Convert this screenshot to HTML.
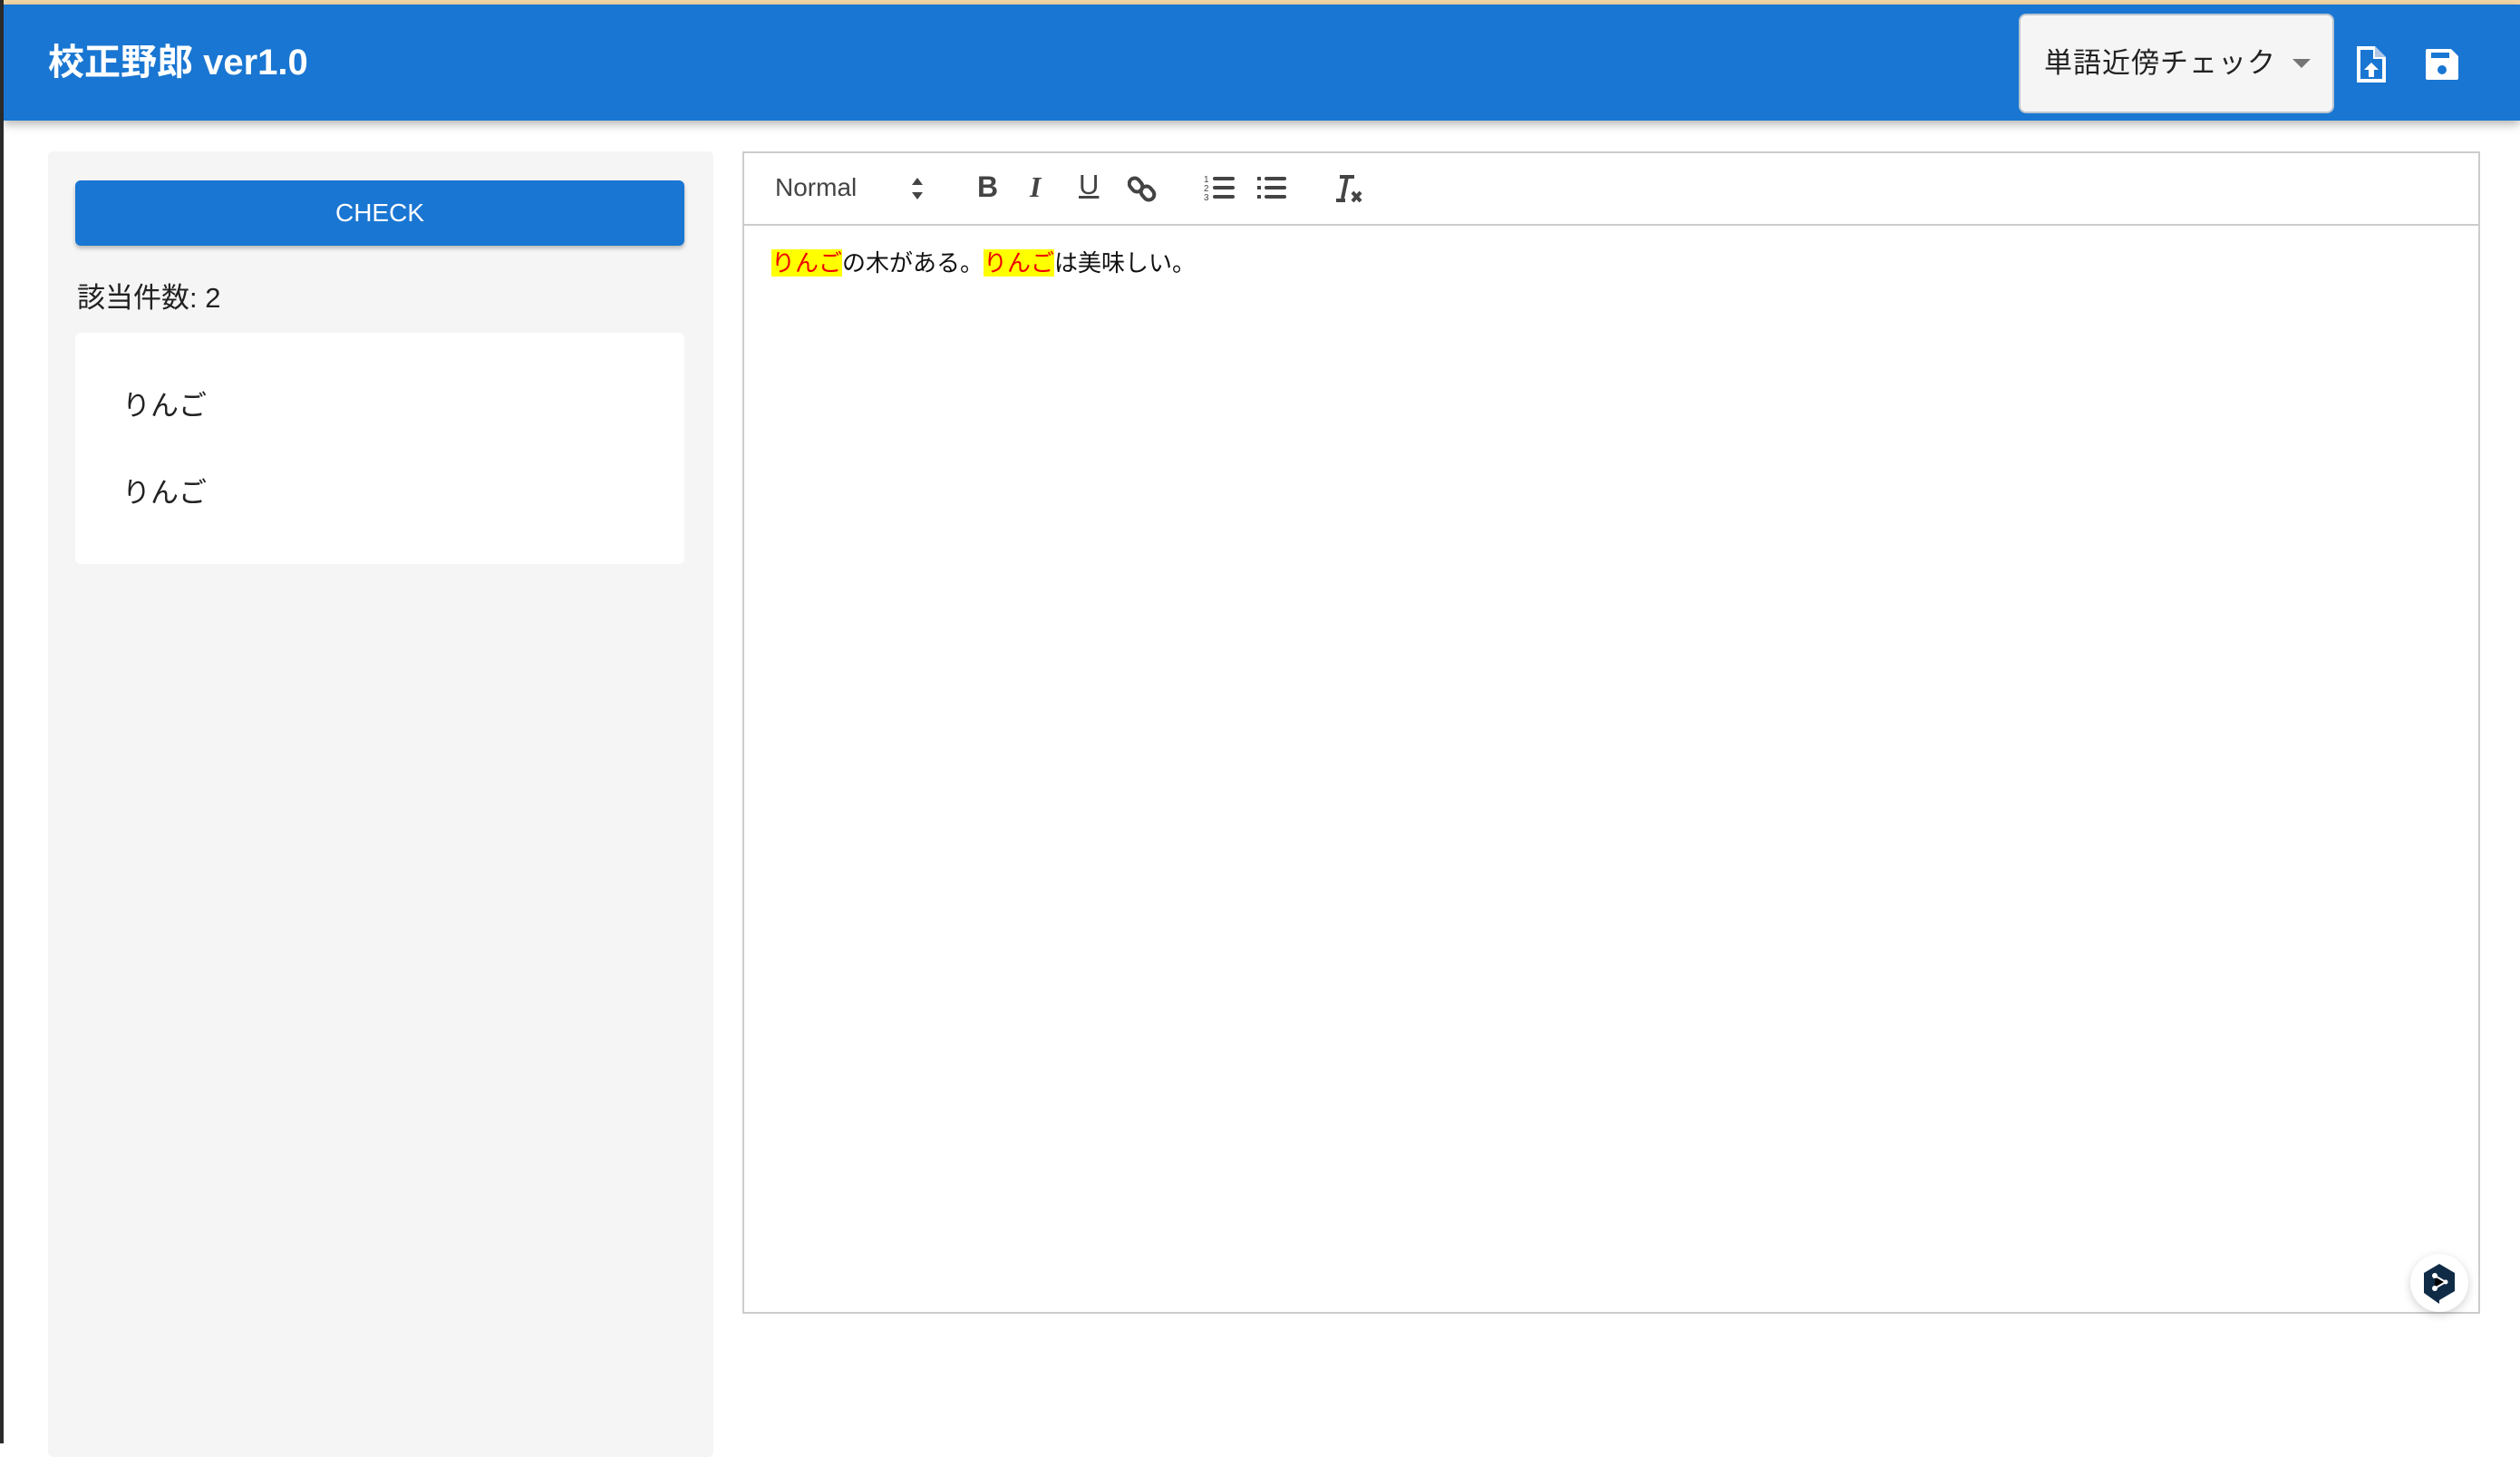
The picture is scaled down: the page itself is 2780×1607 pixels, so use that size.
<!DOCTYPE html>
<html><head><meta charset="utf-8"><style>
*{margin:0;padding:0;box-sizing:border-box}
body{width:2780px;height:1592px;overflow:hidden;background:#fff;position:relative;font-family:"Liberation Sans","Noto Sans CJK JP",sans-serif;}
.abs{position:absolute}
#top{left:0;top:0;width:2780px;height:5px;background:#f3d7a7}
#lb{left:0;top:0;width:4px;height:1592px;background:#2a2a2a}
#hdr{left:4px;top:5px;width:2776px;height:128px;background:#1976d2;box-shadow:0 4px 10px rgba(0,0,0,.3)}
#title{left:53px;top:45px;color:#fff;font-size:40px;font-weight:bold;line-height:48px}
#sel{left:2227px;top:15px;width:348px;height:110px;background:#f5f5f5;border:2px solid #b8c4d0;border-radius:8px;font-size:31px;color:#222;padding-left:26px;line-height:106px;letter-spacing:1px}
#caret{left:2529px;top:65px;width:0;height:0;border-left:10px solid transparent;border-right:10px solid transparent;border-top:10px solid #757575}
#left{left:53px;top:167px;width:734px;height:1440px;background:#f5f5f5;border-radius:6px}
#btn{left:83px;top:199px;width:672px;height:72px;background:#1976d2;border-radius:6px;box-shadow:0 3px 5px rgba(0,0,0,.25);color:#fff;font-size:28px;text-align:center;line-height:72px}
#cnt{left:85px;top:303px;font-size:31px;color:#222}
#list{left:83px;top:367px;width:672px;height:255px;background:#fff;border-radius:6px}
.it{left:135px;font-size:31px;color:#222}
#ed{left:819px;top:167px;width:1917px;height:1282px;border:2px solid #ccc}
#tb{left:819px;top:167px;width:1917px;height:82px;border-bottom:2px solid #ccc}
#norm{left:855px;top:191px;font-size:28px;color:#444}
#txt{left:851px;top:273px;font-size:26px;color:#111;line-height:34px;white-space:nowrap}
.hl{background:#ff0;color:#e00}
#dl{left:2659px;top:1383px;width:64px;height:64px;border-radius:50%;background:#fff;box-shadow:0 3px 10px rgba(0,0,0,.18)}
</style></head><body>
<div class="abs" id="top"></div>
<div class="abs" id="hdr"></div>
<div class="abs" id="lb"></div>
<div class="abs" id="title">校正野郎 ver1.0</div>
<div class="abs" id="sel">単語近傍チェック</div>
<div class="abs" id="caret"></div>
<svg class="abs" style="left:2596px;top:49px" width="40" height="44" viewBox="0 0 20 22"><path d="M2 1h10l6 6v14H2z" fill="#fff"/><path d="M12 1v6h6" fill="#b0c8e8"/><path d="M4 3h7v5h5v11H4z" fill="#1976d2"/><path d="M10 10l-4 4h2.5v4h3v-4H14z" fill="#fff"/></svg>
<svg class="abs" style="left:2674px;top:52px" width="40" height="38" viewBox="0 0 20 19"><path d="M1 2a1 1 0 0 1 1-1h13l4 4v12a1 1 0 0 1-1 1H2a1 1 0 0 1-1-1z" fill="#fff"/><rect x="4" y="3" width="10" height="3" fill="#1976d2"/><circle cx="10" cy="12.5" r="2.5" fill="#1976d2"/></svg>
<div class="abs" id="left"></div>
<div class="abs" id="btn">CHECK</div>
<div class="abs" id="cnt">該当件数: 2</div>
<div class="abs" id="list"></div>
<div class="abs it" style="top:422px">りんご</div>
<div class="abs it" style="top:518px">りんご</div>
<div class="abs" id="ed"></div>
<div class="abs" id="tb"></div>
<div class="abs" id="norm">Normal</div>
<svg class="abs" style="left:1004px;top:196px" width="16" height="24" viewBox="0 0 8 12"><path d="M4 0L7 4H1zM4 12L7 8H1z" fill="#444"/></svg>
<div class="abs" style="left:1078px;top:188px;font-size:32px;font-weight:bold;color:#444">B</div>
<div class="abs" style="left:1136px;top:188px;font-size:32px;font-style:italic;color:#444;font-family:'Liberation Serif',serif;font-weight:bold">I</div>
<div class="abs" style="left:1190px;top:186px;font-size:31px;color:#444;text-decoration:underline;text-decoration-thickness:3px">U</div>
<svg class="abs" style="left:1244px;top:192px" width="32" height="32" viewBox="0 0 16 16"><g fill="none" stroke="#444" stroke-width="2"><rect x="1.5" y="2" width="6" height="8" rx="3" transform="rotate(-40 4.5 6)"/><rect x="8" y="6.5" width="6" height="8" rx="3" transform="rotate(-40 11 10.5)"/></g></svg>
<svg class="abs" style="left:1328px;top:192px" width="34" height="30" viewBox="0 0 17 15"><g fill="#444"><rect x="5" y="1.5" width="12" height="2" rx="1"/><rect x="5" y="6.5" width="12" height="2" rx="1"/><rect x="5" y="11.5" width="12" height="2" rx="1"/></g><g font-size="5" fill="#444" font-family="Liberation Sans"><text x="0" y="4.5">1</text><text x="0" y="9.5">2</text><text x="0" y="14.5">3</text></g></svg>
<svg class="abs" style="left:1385px;top:192px" width="34" height="30" viewBox="0 0 17 15"><g fill="#444"><rect x="5" y="1.5" width="12" height="2" rx="1"/><rect x="5" y="6.5" width="12" height="2" rx="1"/><rect x="5" y="11.5" width="12" height="2" rx="1"/><rect x="1" y="1.5" width="2" height="2"/><rect x="1" y="6.5" width="2" height="2"/><rect x="1" y="11.5" width="2" height="2"/></g></svg>
<svg class="abs" style="left:1472px;top:192px" width="32" height="32" viewBox="0 0 16 16"><g stroke="#444" stroke-width="2" fill="none"><path d="M3 1.5h8M7 1.5l-2.5 12M1 14.5h5"/><path d="M10 10l4.5 5M14.5 10L10 15"/></g></svg>
<div class="abs" id="txt"><span class="hl">りんご</span>の木がある。<span class="hl">りんご</span>は美味しい。</div>
<div class="abs" id="dl"></div>
<svg class="abs" style="left:2672px;top:1392px" width="38" height="46" viewBox="0 0 38 46"><path d="M19 2l17 10v20l-17 10v4l-3-2L2 34V12z" fill="#0f2b46"/><g stroke="#fff" stroke-width="2"><path d="M14 15l12 7-12 7"/></g><g fill="#fff"><circle cx="14" cy="15" r="3"/><circle cx="26" cy="22" r="2.5"/><circle cx="14" cy="29" r="3"/></g></svg>
</body></html>
